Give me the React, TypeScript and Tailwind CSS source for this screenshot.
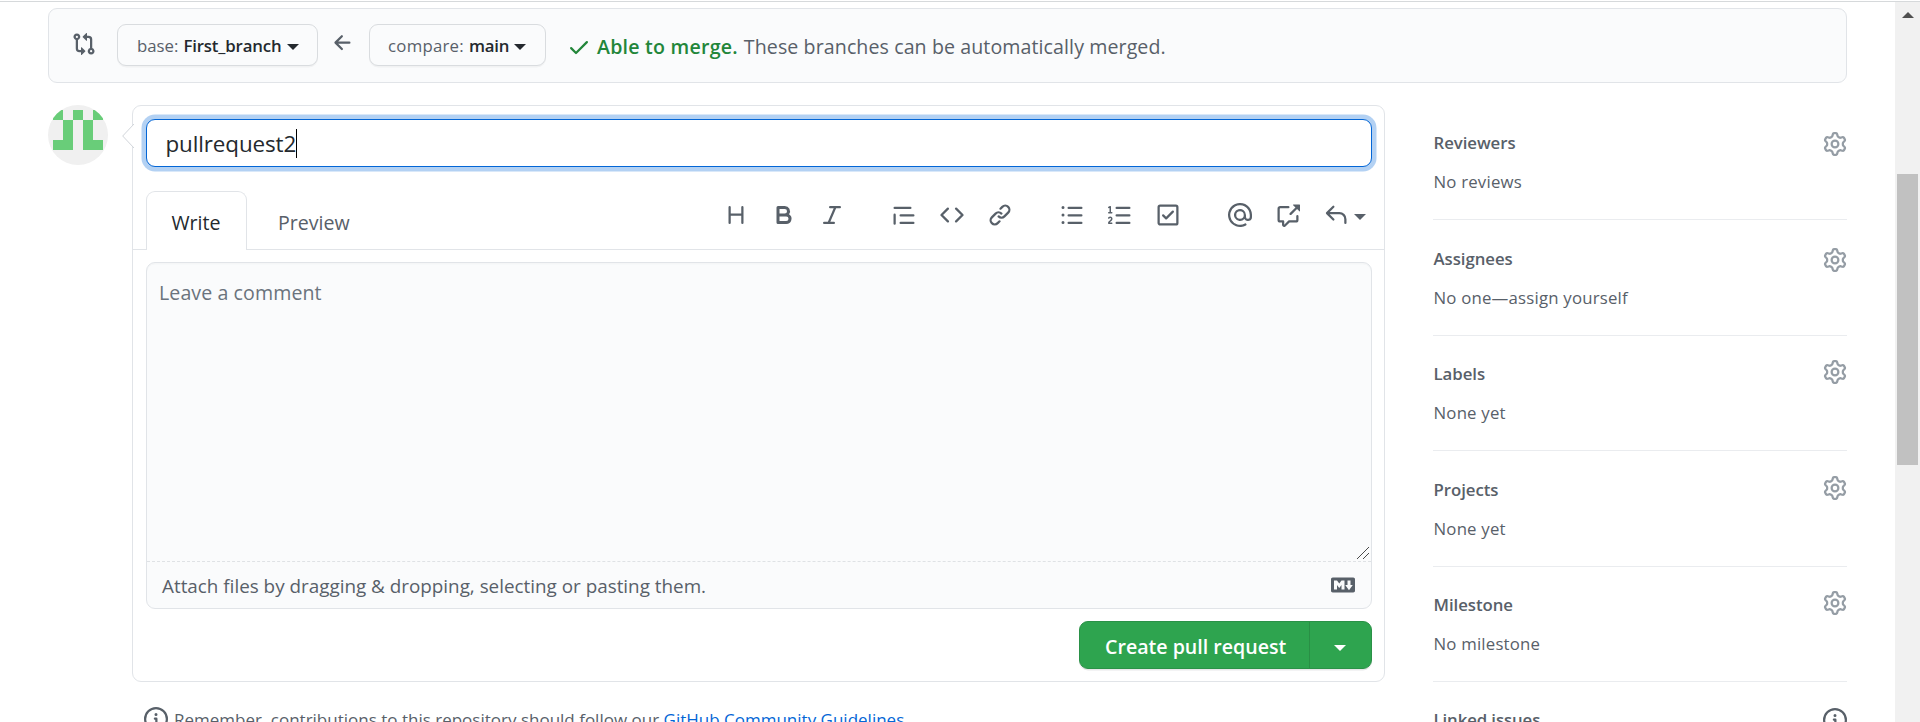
import React from "react";

const PATHS = {
  gitCompare:
    "M9.573.677L7.177 3.073a.25.25 0 000 .354l2.396 2.396A.25.25 0 0010 5.646V4h1a1 1 0 011 1v5.628a2.251 2.251 0 101.5 0V5A2.5 2.5 0 0011 2.5h-1V.854a.25.25 0 00-.427-.177zM6 12v-1.646a.25.25 0 01.427-.177l2.396 2.396a.25.25 0 010 .354l-2.396 2.396A.25.25 0 016 15.146V13.5H5A2.5 2.5 0 012.5 11V5.372a2.25 2.25 0 111.5 0V11a1 1 0 001 1h1zm6.75 0a.75.75 0 100 1.5.75.75 0 000-1.5zM4 3.25a.75.75 0 11-1.5 0 .75.75 0 011.5 0z",
  arrowLeft:
    "M7.78 12.53a.75.75 0 01-1.06 0L2.47 8.28a.75.75 0 010-1.06l4.25-4.25a.75.75 0 011.06 1.06L4.81 7h7.44a.75.75 0 010 1.5H4.81l2.97 2.97a.75.75 0 010 1.06z",
  check:
    "M13.78 4.22a.75.75 0 010 1.06l-7.25 7.25a.75.75 0 01-1.06 0L2.22 9.28a.75.75 0 011.06-1.06L6 10.94l6.72-6.72a.75.75 0 011.06 0z",
  heading:
    "M3.75 2a.75.75 0 01.75.75V7h7V2.75a.75.75 0 011.5 0v10.5a.75.75 0 01-1.5 0V8.5h-7v4.75a.75.75 0 01-1.5 0V2.75A.75.75 0 013.75 2z",
  bold:
    "M4 2a1 1 0 00-1 1v10a1 1 0 001 1h5.5a3.5 3.5 0 001.852-6.47A3.5 3.5 0 008.5 2H4zm4.5 5a1.5 1.5 0 100-3H5v3h3.5zM5 9v3h4.5a1.5 1.5 0 000-3H5z",
  italic:
    "M6 2.75A.75.75 0 016.75 2h6.5a.75.75 0 010 1.5h-2.505l-3.858 9H9.25a.75.75 0 010 1.5h-6.5a.75.75 0 010-1.5h2.505l3.858-9H6.75A.75.75 0 016 2.75z",
  quote:
    "M1.75 2.5a.75.75 0 000 1.5h10.5a.75.75 0 000-1.5H1.75zm4 5a.75.75 0 000 1.5h8.5a.75.75 0 000-1.5h-8.5zm0 5a.75.75 0 000 1.5h8.5a.75.75 0 000-1.5h-8.5zM2.5 7.75a.75.75 0 00-1.5 0v6a.75.75 0 001.5 0v-6z",
  code:
    "M4.72 3.22a.75.75 0 011.06 1.06L2.06 8l3.72 3.72a.75.75 0 11-1.06 1.06L.47 8.53a.75.75 0 010-1.06l4.25-4.25zm6.56 0a.75.75 0 10-1.06 1.06L13.94 8l-3.72 3.72a.75.75 0 101.06 1.06l4.25-4.25a.75.75 0 000-1.06l-4.25-4.25z",
  link:
    "M7.775 3.275a.75.75 0 001.06 1.06l1.25-1.25a2 2 0 112.83 2.83l-2.5 2.5a2 2 0 01-2.83 0 .75.75 0 00-1.06 1.06 3.5 3.5 0 004.95 0l2.5-2.5a3.5 3.5 0 00-4.95-4.95l-1.25 1.25zm-4.69 9.64a2 2 0 010-2.83l2.5-2.5a2 2 0 012.83 0 .75.75 0 001.06-1.06 3.5 3.5 0 00-4.95 0l-2.5 2.5a3.5 3.5 0 004.95 4.95l1.25-1.25a.75.75 0 00-1.06-1.06l-1.25 1.25a2 2 0 01-2.83 0z",
  listUnordered:
    "M2 4a1 1 0 100-2 1 1 0 000 2zm3.75-1.5a.75.75 0 000 1.5h8.5a.75.75 0 000-1.5h-8.5zm0 5a.75.75 0 000 1.5h8.5a.75.75 0 000-1.5h-8.5zm0 5a.75.75 0 000 1.5h8.5a.75.75 0 000-1.5h-8.5zM3 8a1 1 0 11-2 0 1 1 0 012 0zm-1 6a1 1 0 100-2 1 1 0 000 2z",
  listOrdered:
    "M2.003 2.5a.5.5 0 00-.723-.447l-1.003.5a.5.5 0 00.446.895l.28-.14V6H.5a.5.5 0 000 1h2.006a.5.5 0 100-1h-.503V2.5zM5 3.25a.75.75 0 01.75-.75h8.5a.75.75 0 010 1.5h-8.5A.75.75 0 015 3.25zm0 5a.75.75 0 01.75-.75h8.5a.75.75 0 010 1.5h-8.5A.75.75 0 015 8.25zm0 5a.75.75 0 01.75-.75h8.5a.75.75 0 010 1.5h-8.5a.75.75 0 01-.75-.75zM.924 10.32l.003-.004a.851.851 0 01.144-.153A.66.66 0 011.5 10c.195 0 .306.068.374.146a.57.57 0 01.128.376c0 .453-.269.682-.8 1.078l-.035.025C.692 11.98 0 12.495 0 13.5a.5.5 0 00.5.5h2.003a.5.5 0 000-1H1.146c.132-.197.351-.372.654-.597l.047-.035c.47-.35 1.156-.858 1.156-1.845 0-.365-.118-.744-.377-1.038-.268-.303-.658-.484-1.126-.484-.48 0-.84.202-1.068.392a1.858 1.858 0 00-.348.384l-.007.011-.002.004-.001.002-.001.001a.5.5 0 00.851.525z",
  tasklist:
    "M2.5 2.75a.25.25 0 01.25-.25h10.5a.25.25 0 01.25.25v10.5a.25.25 0 01-.25.25H2.75a.25.25 0 01-.25-.25V2.75zM2.75 1A1.75 1.75 0 001 2.75v10.5c0 .966.784 1.75 1.75 1.75h10.5A1.75 1.75 0 0015 13.25V2.75A1.75 1.75 0 0013.25 1H2.75zm9.03 5.28a.75.75 0 00-1.06-1.06L6.75 9.19 5.28 7.72a.75.75 0 00-1.06 1.06l2 2a.75.75 0 001.06 0l4.5-4.5z",
  mention:
    "M4.75 2.37a6.5 6.5 0 006.5 11.26.75.75 0 01.75 1.298 8 8 0 113.994-7.273.754.754 0 01.006.095v1.5a2.75 2.75 0 01-5.072 1.475A4 4 0 1112 8v1.25a1.25 1.25 0 002.5 0V7.867a6.5 6.5 0 00-9.75-5.496V2.37zM10.5 8a2.5 2.5 0 10-5 0 2.5 2.5 0 005 0z",
  crossReference:
    "M16 1.25v4.146a.25.25 0 01-.427.177L14.03 4.03l-3.75 3.75a.75.75 0 11-1.06-1.06l3.75-3.75-1.543-1.543A.25.25 0 0111.604 1h4.146a.25.25 0 01.25.25zM2.75 3.5a.25.25 0 00-.25.25v7.5c0 .138.112.25.25.25h2a.75.75 0 01.75.75v2.19l2.72-2.72a.75.75 0 01.53-.22h4.5a.25.25 0 00.25-.25v-2.5a.75.75 0 111.5 0v2.5A1.75 1.75 0 0113.25 13H9.06l-2.573 2.573A1.457 1.457 0 014 14.543V13H2.75A1.75 1.75 0 011 11.25v-7.5C1 2.784 1.784 2 2.75 2h5.5a.75.75 0 010 1.5h-5.5z",
  reply:
    "M6.78 1.97a.75.75 0 010 1.06L3.81 6h6.44A4.75 4.75 0 0115 10.75v2.5a.75.75 0 01-1.5 0v-2.5a3.25 3.25 0 00-3.25-3.25H3.81l2.97 2.97a.75.75 0 11-1.06 1.06L1.47 7.28a.75.75 0 010-1.06l4.25-4.25a.75.75 0 011.06 0z",
  markdown:
    "M14.85 3H1.15C.52 3 0 3.52 0 4.15v7.69C0 12.48.52 13 1.15 13h13.69c.64 0 1.15-.52 1.15-1.15v-7.7C16 3.52 15.48 3 14.85 3zM9 11H7V8L5.5 9.92 4 8v3H2V5h2l1.5 2L7 5h2v6zm2.99.5L9.5 8H11V5h2v3h1.5l-2.51 3.5z",
  gear:
    "M7.429 1.525a6.593 6.593 0 011.142 0c.036.003.108.036.137.146l.289 1.105c.147.56.55.967.997 1.189.174.086.341.183.501.29.417.278.97.423 1.53.27l1.102-.303c.11-.03.175.016.195.046.219.31.41.641.573.989.014.031.022.11-.059.19l-.815.806c-.411.406-.562.957-.53 1.456a4.588 4.588 0 010 .582c-.032.499.119 1.05.53 1.456l.815.806c.08.08.073.159.059.19a6.494 6.494 0 01-.573.99c-.02.029-.086.074-.195.045l-1.103-.303c-.559-.153-1.112-.008-1.529.27-.16.107-.327.204-.5.29-.449.222-.851.628-.998 1.189l-.289 1.105c-.029.11-.101.143-.137.146a6.613 6.613 0 01-1.142 0c-.036-.003-.108-.037-.137-.146l-.289-1.105c-.147-.56-.55-.967-.997-1.189a4.502 4.502 0 01-.501-.29c-.417-.278-.97-.423-1.53-.27l-1.102.303c-.11.03-.175-.016-.195-.046a6.492 6.492 0 01-.573-.989c-.014-.031-.022-.11.059-.19l.815-.806c.411-.406.562-.957.53-1.456a4.587 4.587 0 010-.582c.032-.499-.119-1.05-.53-1.456l-.815-.806c-.08-.08-.073-.159-.059-.19a6.44 6.44 0 01.573-.99c.02-.029.086-.075.195-.045l1.103.303c.559.153 1.112.008 1.529-.27.16-.107.327-.204.5-.29.449-.222.851-.628.998-1.189l.289-1.105c.029-.11.101-.143.137-.146zM8 0c-.236 0-.47.01-.701.03-.743.065-1.29.615-1.458 1.261l-.29 1.106c-.017.066-.078.158-.211.224a5.994 5.994 0 00-.668.386c-.123.082-.233.09-.3.071L3.27 2.776c-.644-.177-1.392.02-1.82.63a7.977 7.977 0 00-.704 1.217c-.315.675-.111 1.422.363 1.891l.815.806c.05.048.098.147.088.294a6.084 6.084 0 000 .772c.01.147-.038.246-.088.294l-.815.806c-.474.469-.678 1.216-.363 1.891.2.428.436.835.704 1.218.428.609 1.176.806 1.82.63l1.103-.303c.066-.019.176-.011.299.071.213.143.436.272.668.386.133.066.194.158.212.224l.289 1.106c.169.646.715 1.196 1.458 1.26a8.094 8.094 0 001.402 0c.743-.064 1.29-.614 1.458-1.26l.29-1.106c.017-.066.078-.158.211-.224a5.98 5.98 0 00.668-.386c.123-.082.233-.09.3-.071l1.102.302c.644.177 1.392-.02 1.82-.63.268-.382.505-.789.704-1.217.315-.675.111-1.422-.364-1.891l-.814-.806c-.05-.048-.098-.147-.088-.294a6.1 6.1 0 000-.772c-.01-.147.039-.246.088-.294l.814-.806c.475-.469.679-1.216.364-1.891a7.992 7.992 0 00-.704-1.218c-.428-.609-1.176-.806-1.82-.63l-1.103.303c-.066.019-.176.011-.299-.071a5.991 5.991 0 00-.668-.386c-.133-.066-.194-.158-.212-.224L10.16 1.29C9.99.645 9.444.095 8.701.031A8.094 8.094 0 008 0zm1.5 8a1.5 1.5 0 11-3 0 1.5 1.5 0 013 0zM11 8a3 3 0 11-6 0 3 3 0 016 0z",
  info:
    "M8 1.5a6.5 6.5 0 100 13 6.5 6.5 0 000-13zM0 8a8 8 0 1116 0A8 8 0 010 8zm6.5-.25A.75.75 0 017.25 7h1a.75.75 0 01.75.75v2.75h.25a.75.75 0 010 1.5h-2a.75.75 0 010-1.5h.25v-2h-.25a.75.75 0 01-.75-.75zM8 6a1 1 0 100-2 1 1 0 000 2z",
};

type IconName = keyof typeof PATHS;

function Icon({ name, className = "" }: { name: IconName; className?: string }) {
  return (
    <svg viewBox="0 0 16 16" fill="currentColor" fillRule="evenodd" className={`size-6 shrink-0 ${className}`}>
      <path d={PATHS[name]} />
    </svg>
  );
}

function Caret({ className = "" }: { className?: string }) {
  return (
    <svg viewBox="0 0 12 6" fill="currentColor" className={`h-1.5 w-3 shrink-0 ${className}`}>
      <path d="M0 0h12L6 6z" />
    </svg>
  );
}

function Avatar() {
  return (
    <svg viewBox="0 0 60 60" className="size-[60px] shrink-0">
      <clipPath id="avatar">
        <circle cx="30" cy="30" r="30" />
      </clipPath>
      <g clipPath="url(#avatar)">
        <rect width="60" height="60" fill="#f0f0f0" />
        <path
          fill="#69cd79"
          d="M5 5h10v10H5zM25 5h10v10H25zM45 5h10v10H45zM15 15h10v30H5V35h10zM35 15h10v20h10v10H35z"
        />
      </g>
    </svg>
  );
}

function RangeBar() {
  return (
    <div className="mt-1.5 flex h-[75px] w-[1799px] items-start rounded-[9px] border border-[#e1e4e8] bg-[#fafbfc] pl-[23px] text-[#586069]">
      <Icon name="gitCompare" className="mt-[23px]" />
      <button className="mt-[15px] ml-[21px] flex h-[42px] w-[201px] items-center rounded-[9px] border border-[#d9dcdf] bg-[#fafbfc] pl-[19px] text-[16.8px] leading-[26px] shadow-[0_1.5px_0_rgba(27,31,35,0.04)]">
        <span className="mt-px">base:</span>
        <span className="mt-px ml-[5px] font-semibold tracking-[-0.15px] text-[#24292e]">First_branch</span>
        <Caret className="mt-[3px] ml-[5px] text-[#24292e]" />
      </button>
      <Icon name="arrowLeft" className="mt-[22px] ml-[13px]" />
      <button className="mt-[15px] ml-[14px] flex h-[42px] w-[177px] items-center rounded-[9px] border border-[#d9dcdf] bg-[#fafbfc] pl-[18px] text-[16.8px] leading-[26px] shadow-[0_1.5px_0_rgba(27,31,35,0.04)]">
        <span className="mt-px tracking-[0.25px]">compare:</span>
        <span className="mt-px ml-[5px] font-semibold tracking-[-0.25px] text-[#24292e]">main</span>
        <Caret className="mt-[3px] ml-[5px] text-[#24292e]" />
      </button>
      <Icon name="check" className="mt-[26px] ml-[21px] text-[#22863a]" />
      <div className="mt-[23px] ml-[6px] text-[19.6px] leading-[30px] tracking-[0.09px] whitespace-nowrap">
        <span className="font-semibold tracking-[0.22px] text-[#22863a]">Able to merge.</span>
        <span className="ml-[6px]">These branches can be automatically merged.</span>
      </div>
    </div>
  );
}

const TOOL_GROUPS: IconName[][] = [
  ["heading", "bold", "italic"],
  ["quote", "code", "link"],
  ["listUnordered", "listOrdered", "tasklist"],
];

function Toolbar() {
  return (
    <div className="mt-3 mr-[18px] flex gap-12 text-[#586069]">
      {TOOL_GROUPS.map((group) => (
        <div key={group[0]} className="flex gap-6">
          {group.map((name) => (
            <Icon key={name} name={name} />
          ))}
        </div>
      ))}
      <div className="flex gap-6">
        <Icon name="mention" />
        <Icon name="crossReference" />
        <div className="flex">
          <Icon name="reply" />
          <Caret className="mt-[11px] ml-[6px]" />
        </div>
      </div>
    </div>
  );
}

function Composer() {
  return (
    <div className="relative ml-6 h-[577px] w-[1253px] rounded-[9px] border border-[#e1e4e8] bg-white">
      <svg viewBox="0 0 12 24" className="absolute top-[18px] -left-[11px] h-6 w-3">
        <path d="M12 0L.7 12 12 24" fill="#fff" stroke="#d1d5da" />
      </svg>
      <div className="mt-[13px] mr-3 ml-[13px] flex h-12 items-center rounded-[9px] border border-[#0366d6] bg-white pl-[18.5px] text-[22.4px] leading-[34px] text-[#24292e] shadow-[0_0_0_4.5px_rgba(3,102,214,0.3)]">
        <span className="mt-0.5 tracking-[-0.11px]">pullrequest2</span>
        <span className="h-[29px] w-px bg-black" />
      </div>

      <div className="mt-6 flex h-[59px] justify-between border-b border-[#e1e4e8] pl-[13px] text-[19.6px] leading-[30px]">
        <div className="flex h-[59px]">
          <div className="h-[59px] w-[101px] rounded-t-[9px] border border-b-0 border-[#e1e4e8] bg-white pt-4 pl-[24.5px] text-[#24292e]">
            Write
          </div>
          <div className="pt-[17px] pl-[31px] text-[#586069]">Preview</div>
        </div>
        <Toolbar />
      </div>

      <div className="mt-3 mr-3 ml-[13px] h-[347px] rounded-[9px] border border-[#e1e4e8] bg-[#fafbfc] shadow-[inset_0_1.5px_0_rgba(225,228,232,0.2)]">
        <div className="flex h-[299px] flex-col justify-between border-b border-dashed border-[#dfe2e5] pt-[15px] pl-[12px]">
          <div className="text-[19.6px] leading-[30px] tracking-[0.08px] text-[#6a737d]">Leave a comment</div>
          <svg viewBox="0 0 12 12" className="mr-[2px] mb-[2px] size-3 self-end" stroke="#4a4a4a" strokeWidth="1">
            <path d="M0 12L12 0M6 12L12 6" />
          </svg>
        </div>
        <div className="flex h-[46px] items-start justify-between pr-4 pl-[15px] text-[#586069]">
          <div className="mt-2.5 text-[18.85px] leading-[28px]">
            Attach files by dragging &amp; dropping, selecting or pasting them.
          </div>
          <Icon name="markdown" className="mt-[11px]" />
        </div>
      </div>

      <div className="mt-3 mr-3 flex justify-end">
        <div className="flex h-12 w-[293px] rounded-[9px] border border-[#2a9147] bg-[#2ea44f] text-white shadow-[0_1.5px_0_rgba(27,31,35,0.1)]">
          <div className="w-[230px] border-r border-[#298f45] pt-2.5 pl-[25px] text-[19.6px] leading-[30px] font-semibold">
            Create pull request
          </div>
          <Caret className="mt-[23px] ml-[24px]" />
        </div>
      </div>
    </div>
  );
}

const SECTIONS = [
  { title: "Reviewers", body: "No reviews", box: "h-[115px] pt-[25px]", icon: "mt-0.5" },
  { title: "Assignees", body: "No one—assign yourself", box: "h-[116px] pt-[26px]", icon: "mt-0.5" },
  { title: "Labels", body: "None yet", box: "h-[115px] pt-[25px]", icon: "-mt-px" },
  { title: "Projects", body: "None yet", box: "h-[116px] pt-[26px]", icon: "-mt-px" },
  { title: "Milestone", body: "No milestone", box: "h-[115px] pt-[25px]", icon: "-mt-px" },
];

function Sidebar() {
  return (
    <div className="ml-12 w-[414px] text-[16.8px] text-[#586069]">
      {SECTIONS.map((s) => (
        <div key={s.title} className={`border-b border-[#eaecef] ${s.box}`}>
          <div className="flex justify-between leading-[26px]">
            <span className="pl-[0.5px] font-semibold tracking-[-0.05px]">{s.title}</span>
            <Icon name="gear" className={`text-[#959da5] ${s.icon}`} />
          </div>
          <div className="mt-[13px] pl-[0.5px] leading-[26px] tracking-[0.2px]">{s.body}</div>
        </div>
      ))}
      <div className="flex justify-between pt-[25px] leading-[26px]">
        <span className="pl-[0.5px] font-semibold tracking-[-0.1px]">Linked issues</span>
        <Icon name="info" className="mt-px" />
      </div>
    </div>
  );
}

export default function App() {
  return (
    <div className="flex h-[722px] w-[1920px] flex-col overflow-hidden bg-white pt-px font-['Open_Sans','Noto_Sans',sans-serif]">
      <div className="h-px shrink-0 bg-[#d6d9db]" />
      <div className="flex h-[720px]">
        <main className="h-[720px] w-[1895px] overflow-hidden pl-12">
          <RangeBar />
          <div className="mt-[22px] flex items-start">
            <Avatar />
            <div>
              <Composer />
              <div className="mt-[25px] ml-9 flex items-start text-[17px] leading-[26px] whitespace-nowrap text-[#586069]">
                <Icon name="info" />
                <div className="ml-[6px]">
                  Remember, contributions to this repository should follow our{" "}
                  <a className="text-[#0366d6]">GitHub Community Guidelines</a>.
                </div>
              </div>
            </div>
            <Sidebar />
          </div>
        </main>
        <div className="flex h-[720px] w-[25px] flex-col items-center bg-[#f1f1f1] pt-2.5">
          <svg viewBox="0 0 12 6" fill="#505050" className="h-1.5 w-3 shrink-0">
            <path d="M0 6h12L6 0z" />
          </svg>
          <div className="mt-[156px] h-[291px] w-[21px] shrink-0 bg-[#c1c1c1]" />
        </div>
      </div>
    </div>
  );
}
